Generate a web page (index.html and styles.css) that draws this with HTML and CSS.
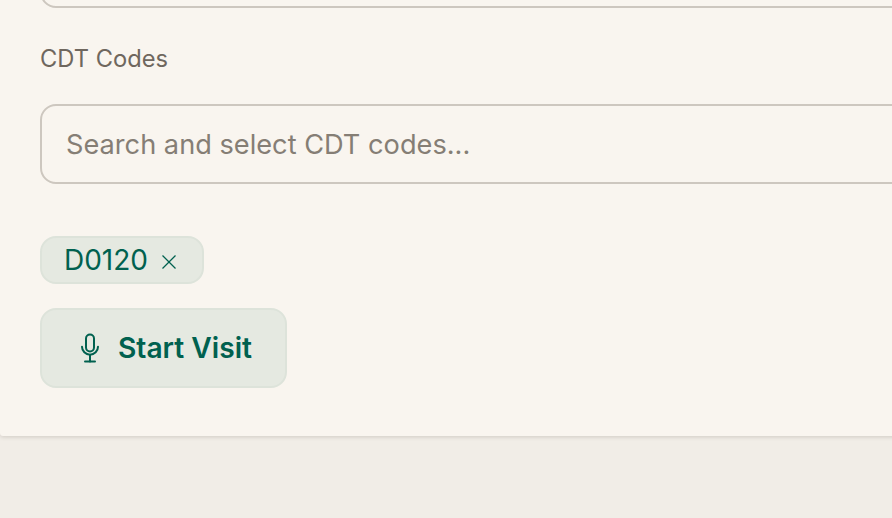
FILE: index.html
```html
<!DOCTYPE html>
<html lang="en">
<head>
    <meta charset="UTF-8">
    <meta name="viewport" content="width=device-width, initial-scale=1.0">
    <title>New Visit</title>
    <link rel="stylesheet" href="styles.css">
</head>
<body>
    <div class="panel">
        <div class="field-box field-box-prev"></div>

        <label class="field-label" for="cdtSearch">CDT Codes</label>
        <input class="field-box field-input" id="cdtSearch" type="text" placeholder="Search and select CDT codes...">

        <div class="tags">
            <span class="tag">D0120
                <svg class="tag-x" viewBox="0 0 16 16" fill="none" stroke="currentColor" stroke-width="1.3">
                    <path d="M1.5 1.5l13 13"/>
                    <path d="M14.5 1.5l-13 13"/>
                </svg>
            </span>
        </div>

        <button class="start-btn">
            <svg class="mic" viewBox="0 0 24 24" fill="none" stroke="currentColor" stroke-width="1.5" stroke-linecap="round" stroke-linejoin="round">
                <rect x="9" y="1.9" width="6" height="12.7" rx="3"/>
                <path d="M6 11a6 6 0 0 0 12 0"/>
                <path d="M12 17v5.2"/>
                <path d="M8.25 22.2h7.5"/>
            </svg>
            Start Visit
        </button>
    </div>
</body>
</html>
```

FILE: styles.css
```css
:root { --bg: #f1ede7; --panel: #f9f5ef; --line: #cdc7bf; --green: #00614f; --green-bg: #e5e9e1; --green-line: #dde3da; }

* {
    box-sizing: border-box;
    margin: 0;
    padding: 0;
}

html, body {
    height: 100%;
    overflow: hidden;
}

body {
    background-color: var(--bg);
    font-family: 'Inter', 'Liberation Sans', sans-serif;
}

.panel {
    display: flex;
    flex-direction: column;
    align-items: flex-start;
    width: 1100px;
    height: 508px;
    margin-top: -72px;
    padding: 0 40px;
    background-color: var(--panel);
    border-radius: 3px;
    box-shadow: 0 1px 4px rgba(60, 50, 40, 0.18);
}

.field-box {
    display: block;
    width: 100%;
    height: 80px;
    border: 2px solid var(--line);
    border-radius: 16px;
    background-color: transparent;
}

.field-label {
    margin-top: 35px;
    font-size: 23.7px;
    line-height: 32px;
    color: #6f675e;
}

.field-input {
    margin-top: 29px;
    padding: 0 24px;
    font-family: inherit;
    font-size: 27.2px;
    color: #3d3832;
    outline: none;
}

.field-input::placeholder {
    color: #857e75;
    opacity: 1;
}

.tags {
    display: flex;
    gap: 8px;
    margin-top: 52px;
}

.tag {
    display: flex;
    align-items: center;
    gap: 13px;
    height: 48px;
    padding: 0 25px 0 22px;
    font-size: 28px;
    color: var(--green);
    background-color: var(--green-bg);
    border: 2px solid var(--green-line);
    border-radius: 16px;
}

.tag-x {
    width: 16px;
    height: 16px;
    margin-top: 4px;
}

.start-btn {
    display: flex;
    align-items: center;
    gap: 12px;
    height: 80px;
    margin-top: 24px;
    padding: 0 33px 0 32px;
    font-family: inherit;
    font-size: 28.2px;
    font-weight: 600;
    color: var(--green);
    background-color: var(--green-bg);
    border: 2px solid var(--green-line);
    border-radius: 16px;
    cursor: pointer;
}

.mic {
    width: 32px;
    height: 32px;
}
```
